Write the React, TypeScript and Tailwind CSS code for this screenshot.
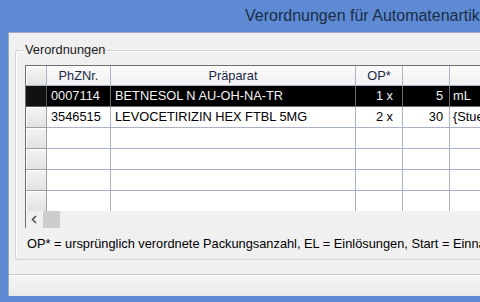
import React from "react";

const font = { fontFamily: '"Liberation Sans", Arial, sans-serif' };

type Row = { pz: string; name: string; op: string; n: string; unit: string };

const rows: (Row | null)[] = [
  { pz: "0007114", name: "BETNESOL N AU-OH-NA-TR", op: "1 x", n: "5", unit: "mL" },
  { pz: "3546515", name: "LEVOCETIRIZIN HEX FTBL 5MG", op: "2 x", n: "30", unit: "{Stue" },
  null,
  null,
  null,
  null,
];

function HeaderRow() {
  return (
    <div className="grid grid-cols-[21px_64px_245px_47px_47px_200px] h-[20px] text-[12.8px] text-[#1c2b45]">
      <div className="border-r border-b border-[#a9b3c4] bg-gradient-to-b from-[#f7f7f7] to-[#e3e3e3] shadow-[inset_1px_1px_0_#ffffff]" />
      <div className="border-r border-b border-[#a9b3c4] bg-gradient-to-b from-[#fbfbfb] to-[#f1f1f1] flex items-center justify-center">PhZNr.</div>
      <div className="border-r border-b border-[#a9b3c4] bg-gradient-to-b from-[#fbfbfb] to-[#f1f1f1] flex items-center justify-center">Präparat</div>
      <div className="border-r border-b border-[#a9b3c4] bg-gradient-to-b from-[#fbfbfb] to-[#f1f1f1] flex items-center justify-center">OP*</div>
      <div className="border-r border-b border-[#a9b3c4] bg-gradient-to-b from-[#fbfbfb] to-[#f1f1f1]" />
      <div className="border-b border-[#a9b3c4] bg-gradient-to-b from-[#fbfbfb] to-[#f1f1f1]" />
    </div>
  );
}

function DataRow({ row, selected }: { row: Row | null; selected: boolean }) {
  const cell = selected
    ? "border-r border-b border-[#6b6b6b] bg-black text-[#f2f2f2]"
    : "border-r border-b border-[#a9b3c4] bg-white text-black";
  const rh = selected
    ? "border-r border-b border-[#5a5a5a] bg-[#111111]"
    : "border-r border-b border-[#a0a0a0] bg-gradient-to-b from-[#f4f4f4] to-[#e2e2e2] shadow-[inset_1px_1px_0_#ffffff]";
  return (
    <div className="grid grid-cols-[21px_64px_245px_47px_47px_200px] h-[21px] text-[12.8px]">
      <div className={rh} />
      <div className={cell + " flex items-center pl-[4px] whitespace-nowrap"}>{row?.pz}</div>
      <div className={cell + " flex items-center pl-[4px] whitespace-nowrap overflow-hidden"}>{row?.name}</div>
      <div className={cell + " flex items-center justify-end pr-[9px] whitespace-nowrap"}>{row?.op}</div>
      <div className={cell + " flex items-center justify-end pr-[6px] whitespace-nowrap"}>{row?.n}</div>
      <div className={cell + " flex items-center pl-[3px] whitespace-nowrap"}>{row?.unit}</div>
    </div>
  );
}

export default function App() {
  return (
    <div className="w-[480px] h-[302px] bg-[#5d8ad2] flex flex-col overflow-hidden" style={font}>
      <div className="h-[32px] shrink-0 flex items-center pl-[245px] text-[16px] text-[#1b2d4a] whitespace-nowrap">
        Verordnungen für Automatenartikel
      </div>
      <div className="flex-1 ml-[8px] mb-[6px] bg-[#f0f0f0] border-l border-t border-[#9ea9bb] flex flex-col">
        <div className="relative ml-[6px] mt-[17px] h-[210px] border-l border-t border-b border-[#d0d3d8] rounded-tl-[3px] rounded-bl-[3px] shadow-[inset_1px_1px_0_#ffffff] pl-[9px] pt-[14px]">
          <span className="absolute left-[8px] top-[-9px] px-[1px] bg-[#f0f0f0] text-[12.8px] text-[#1a1a1a] leading-[16px]">
            Verordnungen
          </span>
          <div className="h-[163px] border-l border-t border-[#6e6e6e] bg-white flex flex-col overflow-hidden">
            <div className="h-[145px] overflow-hidden">
              <HeaderRow />
              {rows.map((r, i) => (
                <DataRow key={i} row={r} selected={i === 0} />
              ))}
            </div>
            <div className="h-[17px] bg-[#f0f0f0] flex items-stretch">
              <div className="w-[17px] flex items-center justify-center">
                <svg width="17" height="17" viewBox="0 0 17 17">
                  <polyline points="10,5 6.5,8.5 10,12" fill="none" stroke="#505050" strokeWidth="1.6" />
                </svg>
              </div>
              <div className="w-[17px] bg-[#cdcdcd]" />
            </div>
          </div>
          <div className="mt-[9px] ml-[2px] text-[12.8px] leading-[14px] text-black whitespace-nowrap">
            OP* = ursprünglich verordnete Packungsanzahl, EL = Einlösungen, Start = Einnahmebeginn
          </div>
        </div>
        <div className="mt-[14px] flex-1 border-t border-[#c7c7c7] bg-gradient-to-b from-[#f4f4f4] to-[#ebebeb] shadow-[inset_0_1px_0_#ffffff]" />
      </div>
    </div>
  );
}
